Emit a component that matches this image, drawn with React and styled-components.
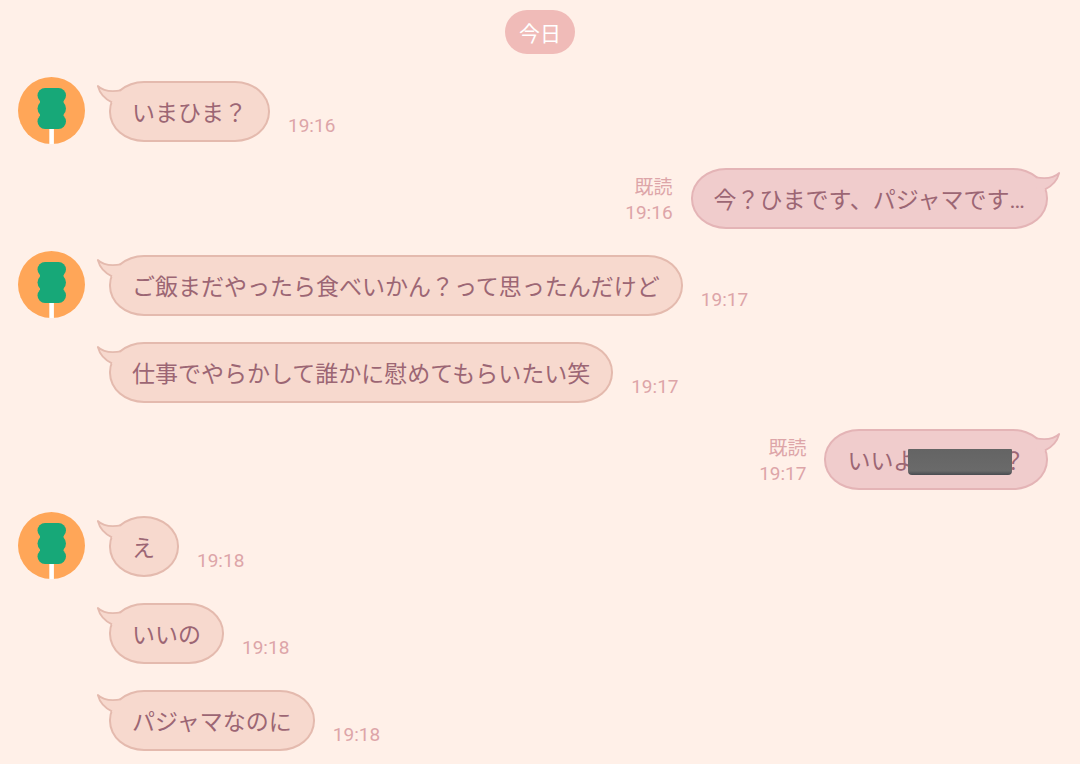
import React from "react";
import styled, { createGlobalStyle } from "styled-components";

const messages = [
  { id: 1, from: "them", avatar: true, text: "いまひま？", time: "19:16" },
  { id: 2, from: "me", text: "今？ひまです、パジャマです…", time: "19:16" },
  {
    id: 3,
    from: "them",
    avatar: true,
    text: "ご飯まだやったら食べいかん？って思ったんだけど",
    time: "19:17",
  },
  {
    id: 4,
    from: "them",
    text: "仕事でやらかして誰かに慰めてもらいたい笑",
    time: "19:17",
  },
  { id: 5, from: "me", text: "いいよ", masked: true, after: "？", time: "19:17" },
  { id: 6, from: "them", avatar: true, text: "え", time: "19:18" },
  { id: 7, from: "them", text: "いいの", time: "19:18" },
  { id: 8, from: "them", text: "パジャマなのに", time: "19:18" },
];

function DangoIcon() {
  return (
    <svg width='67' height='67' viewBox='0 0 67 67' aria-hidden='true'>
      <circle cx='33.5' cy='33.5' r='33.5' fill='#ffa658' />
      <rect x='31.3' y='48' width='4.6' height='19' fill='#fff' />
      <rect x='19.5' y='11' width='28.5' height='15' rx='7.5' fill='#17a878' />
      <rect x='19.5' y='23.5' width='28.5' height='16' rx='8' fill='#17a878' />
      <rect x='19.5' y='37' width='28.5' height='15' rx='7.5' fill='#17a878' />
      <rect x='22' y='18' width='23.5' height='27' fill='#17a878' />
    </svg>
  );
}

function Tail({ mine }) {
  return (
    <TailSvg $mine={mine} viewBox='0 0 28 24' aria-hidden='true'>
      <path
        className='fill'
        d='M1.8 2 C6 6.2 14 8.2 24.5 6.6 L29 10 L20 23 L15.4 18.2 C8 14.5 3.5 8.5 1.8 2Z'
      />
      <path
        className='line'
        d='M25 6.4 C15 8.2 6.5 6.4 1.8 2 C3.5 8.5 8 14.5 16 18.4'
      />
    </TailSvg>
  );
}

function Message({ message }) {
  const mine = message.from === "me";
  return (
    <MessageRow $mine={mine}>
      {!mine && <AvatarSlot>{message.avatar && <DangoIcon />}</AvatarSlot>}
      <MessageBody $mine={mine}>
        <Bubble $mine={mine}>
          <Tail mine={mine} />
          {message.text}
          {message.masked && <Mask />}
          {message.after}
        </Bubble>
        <Meta $mine={mine}>
          {mine && <span>既読</span>}
          <time>{message.time}</time>
        </Meta>
      </MessageBody>
    </MessageRow>
  );
}

function App() {
  return (
    <ChatWrapper>
      <GlobalStyle />
      <DateLabel>今日</DateLabel>
      <MessageList>
        {messages.map((message) => (
          <Message key={message.id} message={message} />
        ))}
      </MessageList>
    </ChatWrapper>
  );
}

const GlobalStyle = createGlobalStyle`
  * {
    box-sizing: border-box;
  }

  body {
    margin: 0;
    background-color: #fff0e8;
    font-family: Roboto, "Noto Sans CJK JP", sans-serif;
  }
`;

const ChatWrapper = styled.main`
  padding: 10px 32px 10px 18px;

  display: flex;
  flex-direction: column;
  gap: 23px;
`;

const DateLabel = styled.div`
  height: 44px;
  padding: 0 14px;
  margin-left: 14px;
  align-self: center;

  display: flex;
  align-items: center;

  background-color: #f0bbb8;
  border-radius: 22px;

  font-size: 21px;
  color: #ffffff;
`;

const MessageList = styled.ol`
  margin: 0;
  padding: 0;

  display: flex;
  flex-direction: column;
  gap: 20px;

  list-style: none;
`;

const MessageRow = styled.li`
  display: flex;
  justify-content: ${(props) => (props.$mine ? "flex-end" : "flex-start")};
  gap: 24px;
`;

const AvatarSlot = styled.div`
  width: 67px;
  height: 67px;

  flex-shrink: 0;
`;

const MessageBody = styled.div`
  padding: 4px 0 2px;

  display: flex;
  flex-direction: ${(props) => (props.$mine ? "row-reverse" : "row")};
  align-items: flex-end;
  gap: 18px;
`;

const Bubble = styled.div`
  position: relative;
  min-width: 70px;
  min-height: 61px;
  padding: 4px 21px 0;

  display: flex;
  align-items: center;

  background-color: ${(props) => (props.$mine ? "#f0cccc" : "#f7d9ce")};
  border: 2px solid ${(props) => (props.$mine ? "#e4b4b6" : "#e4baae")};
  border-radius: 35px / 30px;

  font-size: 23px;
  line-height: 34px;
  color: #9c6674;
`;

const TailSvg = styled.svg`
  width: 28px;
  height: 24px;

  position: absolute;
  top: 1px;
  ${(props) => (props.$mine ? "right: -15px;" : "left: -15px;")}
  ${(props) => props.$mine && "transform: scaleX(-1);"}

  .fill {
    fill: ${(props) => (props.$mine ? "#f0cccc" : "#f7d9ce")};
  }

  .line {
    fill: none;
    stroke: ${(props) => (props.$mine ? "#e4b4b6" : "#e4baae")};
    stroke-width: 1.8;
    stroke-linejoin: round;
  }
`;

const Mask = styled.span`
  width: 104px;
  height: 26px;
  margin: 0 -10px 0 -8px;
  z-index: 1;

  background: linear-gradient(#646464, #6a6a6a 84%, #484b50);
  border-radius: 1px 1px 4px 4px;
`;

const Meta = styled.div`
  padding-bottom: 4px;

  display: flex;
  flex-direction: column;
  align-items: ${(props) => (props.$mine ? "flex-end" : "flex-start")};

  font-size: 19px;
  line-height: 25px;
  color: #dda5a8;
`;

export default App;
